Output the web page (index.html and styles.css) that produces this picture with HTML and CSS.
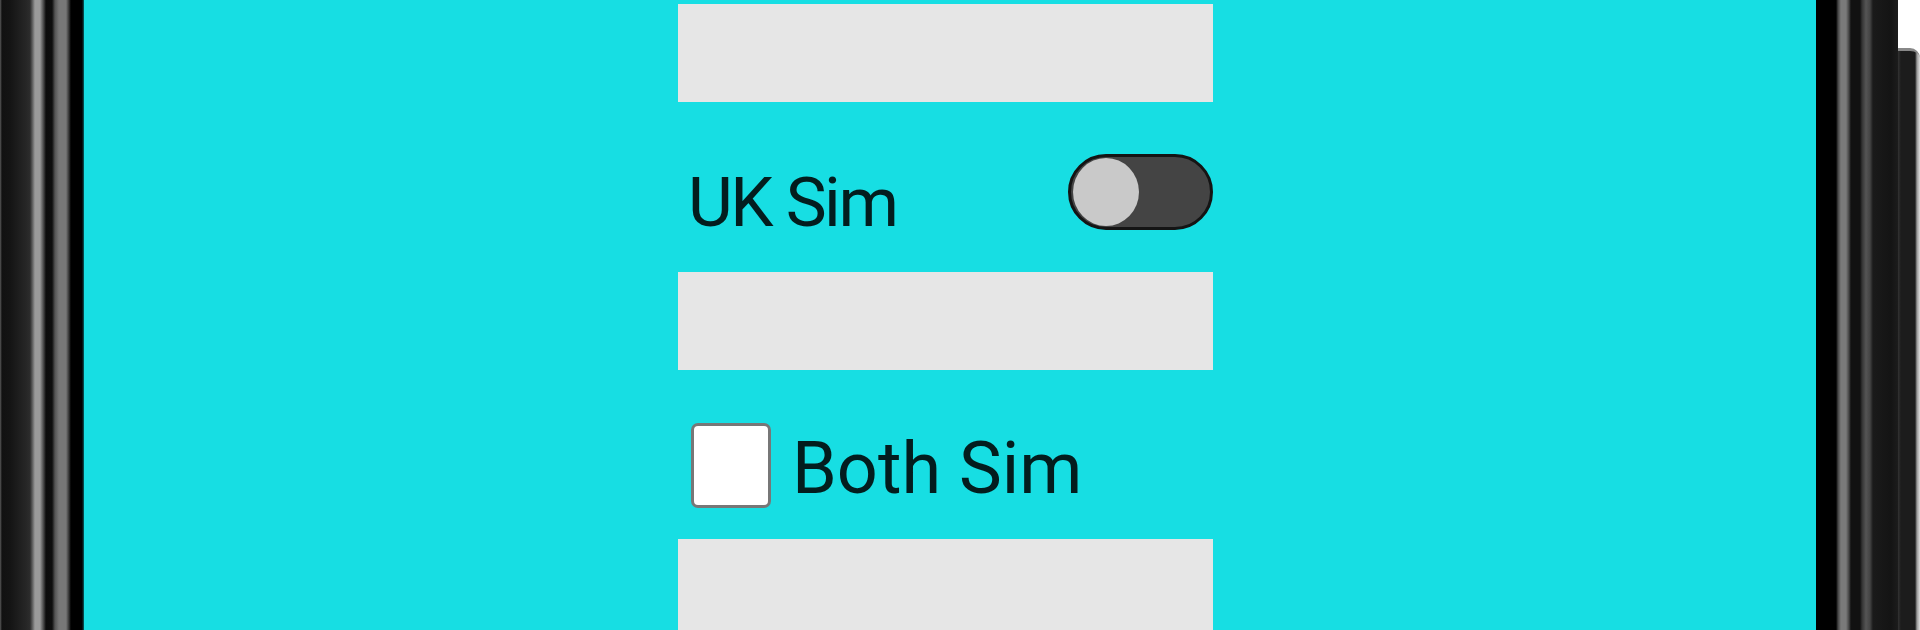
FILE: index.html
```html
<!DOCTYPE html>
<html lang="en">
<head>
<meta charset="utf-8">
<title>Sim settings</title>
<link rel="stylesheet" href="styles.css">
</head>
<body>
<div class="device">
  <div class="bezel-left"></div>
  <main class="screen">
    <div class="form">
      <div class="field"></div>
      <div class="switch-row">
        <span class="switch-label">UK Sim</span>
        <span class="switch"><span class="thumb"></span></span>
      </div>
      <div class="field field-2"></div>
      <label class="check-row">
        <span class="checkbox"></span>
        <span class="check-label">Both Sim</span>
      </label>
      <div class="field field-3"></div>
    </div>
  </main>
  <div class="bezel-right">
    <div class="bezel-right-main"></div>
    <div class="side">
      <div class="side-top"></div>
      <div class="side-button"></div>
    </div>
  </div>
</div>
</body>
</html>
```
FILE: styles.css
```css
html, body {
  margin: 0;
  padding: 0;
  height: 100%;
  overflow: hidden;
}
body {
  font-family: Roboto, "Noto Sans", "Liberation Sans", sans-serif;
  background: #000;
}
.device {
  display: flex;
  height: 630px;
  width: 1920px;
}
.bezel-left {
  width: 84px;
  flex: none;
  background: linear-gradient(to right,
    #5a5a5a 0px, #111 2px, #141414 10px, #262626 26px, #2c2c2c 30px,
    #555 32px, #9a9a9a 35px, #9a9a9a 40px, #555 43px, #0c0c0c 46px,
    #0e0e0e 52px, #555 55px, #777 59px, #777 66px, #333 69px,
    #000 71px, #000 82px, #0a5f62 84px);
}
.screen {
  flex: 1;
  background: #17dee3;
  overflow: hidden;
}
.form {
  width: 535px;
  margin-left: 594px;
  display: flex;
  flex-direction: column;
}
.field {
  height: 98px;
  background: #e6e6e6;
  margin-top: 4px;
}
.field-2 { margin-top: 42px; }
.field-3 { margin-top: 31px; }

.switch-row {
  margin-top: 52px;
  height: 76px;
  display: flex;
  justify-content: space-between;
  align-items: flex-start;
}
.switch-label {
  font-size: 69px;
  line-height: 69px;
  letter-spacing: -2.5px;
  margin-top: 14px;
  padding-left: 10px;
  color: rgba(0, 0, 0, 0.87);
}
.switch {
  position: relative;
  width: 145px;
  height: 76px;
  box-sizing: border-box;
  border: 3px solid #141414;
  border-radius: 38px;
  background: #444;
}
.thumb {
  position: absolute;
  left: 2px;
  top: 1px;
  width: 66px;
  height: 68px;
  border-radius: 50%;
  background: #c9c9c9;
}

.check-row {
  margin-top: 53px;
  height: 85px;
  display: flex;
  align-items: flex-start;
}
.checkbox {
  margin-left: 13px;
  width: 80px;
  height: 85px;
  box-sizing: border-box;
  border: 3px solid #777;
  border-radius: 7px;
  background: #fff;
}
.check-label {
  margin-left: 21px;
  font-size: 72px;
  line-height: 72px;
  margin-top: 10px;
  color: rgba(0, 0, 0, 0.87);
}

.bezel-right {
  width: 104px;
  flex: none;
  display: flex;
}
.bezel-right-main {
  width: 82px;
  background: linear-gradient(to right,
    #000 0px, #000 20px, #444 22px, #7a7a7a 25px, #7a7a7a 30px,
    #444 33px, #111 35px, #111 44px, #333 46px, #555 50px, #444 54px,
    #1a1a1a 57px, #141414 75px, #1c1c1c 82px);
}
.side {
  flex: 1;
  display: flex;
  flex-direction: column;
  background: #fff;
}
.side-top {
  height: 48px;
}
.side-button {
  flex: 1;
  border-top-right-radius: 10px;
  border-top: 3px solid #888;
  background: linear-gradient(to right, #333 0px, #1c1c1c 3px, #1c1c1c 17px, #999 19px, #ddd 22px);
}
```
